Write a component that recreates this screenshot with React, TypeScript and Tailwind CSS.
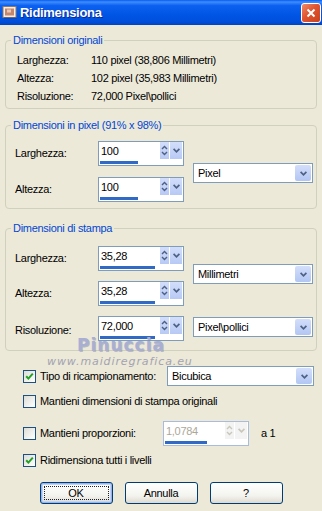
import React from 'react';

const Chevron: React.FC<{ color?: string }> = ({ color = '#4D6185' }) => (
  <svg width="7" height="5" viewBox="0 0 7 5">
    <path d="M0.6 0.9 L3.5 3.8 L6.4 0.9" fill="none" stroke={color} strokeWidth="1.7" />
  </svg>
);

const SpinArrows: React.FC<{ color?: string }> = ({ color = '#4D6185' }) => (
  <svg width="7" height="11" viewBox="0 0 7 11">
    <path d="M1 4 L3.5 1.5 L6 4" fill="none" stroke={color} strokeWidth="1.4" />
    <path d="M1 7 L3.5 9.5 L6 7" fill="none" stroke={color} strokeWidth="1.4" />
  </svg>
);

type SpinProps = { value: string; bar: string; disabled?: boolean };

const SpinBox: React.FC<SpinProps> = ({ value, bar, disabled }) => (
  <div
    className={`w-[86px] h-[25px] shrink-0 border bg-white flex flex-col ${
      disabled ? 'border-[#A9BCDD]' : 'border-[#7F9DB9]'
    }`}
  >
    <div className="flex h-[18px]">
      <span className={`flex-1 pl-[2px] leading-[18px] ${disabled ? 'text-[#ACA899]' : 'text-black'}`}>{value}</span>
      <div
        className={`w-[9px] h-[17px] flex items-center justify-center ${
          disabled ? 'bg-[#F3F3F3]' : 'bg-[linear-gradient(to_bottom,#D3DEFA,#B7C9F4)]'
        }`}
      >
        <SpinArrows color={disabled ? '#C9C7BA' : '#4D6185'} />
      </div>
      <div
        className={`ml-[1px] mr-[1px] w-[12px] h-[17px] flex items-center justify-center ${
          disabled ? 'bg-[#F3F3F3]' : 'bg-[linear-gradient(to_bottom,#D3DEFA,#B7C9F4)]'
        }`}
      >
        <Chevron color={disabled ? '#C9C7BA' : '#4D6185'} />
      </div>
    </div>
    <div className={`ml-[1px] mt-[1px] h-[3px] bg-[#316AC5] ${bar}`} />
  </div>
);

const Combo: React.FC<{ label: string; width: string }> = ({ label, width }) => (
  <div className={`${width} h-[20px] border border-[#7F9DB9] bg-white flex items-center`}>
    <span className="flex-1 pl-[4px]">{label}</span>
    <div className="mr-[1px] w-[16px] h-[16px] rounded-[2px] bg-[linear-gradient(to_bottom,#D3DEFA,#B2C6F3)] flex items-center justify-center">
      <Chevron />
    </div>
  </div>
);

const Check: React.FC<{ checked?: boolean }> = ({ checked }) => (
  <span className="w-[13px] h-[13px] shrink-0 border border-[#1C5180] bg-[linear-gradient(135deg,#DCDCD7,#FFFFFF)] flex items-center justify-center">
    {checked && (
      <svg width="9" height="9" viewBox="0 0 9 9">
        <path d="M1.2 4.2 L3.4 6.6 L7.8 1.6" fill="none" stroke="#21A121" strokeWidth="2" />
      </svg>
    )}
  </span>
);

const Group: React.FC<{ title: string; className: string; children: React.ReactNode }> = ({ title, className, children }) => (
  <fieldset className={`mx-[5px] border border-[#D0D0BF] rounded-[4px] ${className}`}>
    <legend className="ml-[5px] px-[2px] leading-[13px] text-[#0046D5]">{title}</legend>
    {children}
  </fieldset>
);

const XpButton: React.FC<{ label: string; focused?: boolean }> = ({ label, focused }) => (
  <button
    className={`relative w-[73px] h-[22px] rounded-[3px] border border-[#003C74] bg-[linear-gradient(to_bottom,#FFFFFF,#F3F3EE_65%,#DDD9CE)] text-black ${
      focused ? 'shadow-[inset_0_0_0_1px_#98B4EE,inset_0_0_0_2px_#C2D3F8]' : ''
    }`}
  >
    {focused && <span className="absolute inset-[3px] border border-dotted border-[#222]" />}
    {label}
  </button>
);

export default function App() {
  return (
    <div className="relative w-[322px] h-[511px] overflow-hidden bg-[#ECE9D8] text-[11px] tracking-[-0.3px] text-black font-['Liberation_Sans',Arial,sans-serif]">
      {/* title bar */}
      <div className="h-[25px] flex items-center bg-[linear-gradient(to_bottom,#0A5CF0_0%,#3D8DFF_8%,#0D61F0_22%,#0055E5_60%,#004FDB_85%,#0043C6_100%)]">
        <svg width="16" height="15" viewBox="0 0 16 15" className="ml-[2px]">
          <rect x="1" y="1.5" width="13" height="11" fill="#F4EEE4" stroke="#8C7A6A" />
          <rect x="3" y="3.5" width="9" height="7" fill="#C5866E" />
          <rect x="5" y="4.5" width="4" height="3" fill="#E8C7B4" />
          <rect x="2" y="12.5" width="13" height="1.5" fill="#1E3F9A" opacity="0.6" />
        </svg>
        <span className="ml-[2px] text-[13px] font-bold text-white tracking-[-0.3px] [text-shadow:1px_1px_0_#0A2A9A]">
          Ridimensiona
        </span>
        <div className="ml-auto mr-[1px] w-[20px] h-[20px] rounded-[3px] border border-white bg-[linear-gradient(135deg,#EF8B6A,#E0542E_45%,#C9411C)] flex items-center justify-center">
          <svg width="10" height="10" viewBox="0 0 10 10">
            <path d="M1.5 1.5 L8.5 8.5 M8.5 1.5 L1.5 8.5" stroke="white" strokeWidth="2" />
          </svg>
        </div>
      </div>

      <Group title="Dimensioni originali" className="mt-[9px] pt-[4px] pb-[3px]">
        <div className="pl-[11px] flex flex-col">
          {[
            ['Larghezza:', '110 pixel (38,806 Millimetri)'],
            ['Altezza:', '102 pixel (35,983 Millimetri)'],
            ['Risoluzione:', '72,000 Pixel\\pollici'],
          ].map(([k, v]) => (
            <div key={k} className="h-[18px] flex items-center">
              <span className="w-[74px]">{k}</span>
              <span>{v}</span>
            </div>
          ))}
        </div>
      </Group>

      <Group title="Dimensioni in pixel (91% x 98%)" className="mt-[10px] pt-[9px] pb-[6px]">
        <div className="pl-[9px] flex items-center">
          <div className="flex flex-col gap-[11px]">
            <div className="flex items-center">
              <span className="w-[83px]">Larghezza:</span>
              <SpinBox value="100" bar="w-[38px]" />
            </div>
            <div className="flex items-center">
              <span className="w-[83px]">Altezza:</span>
              <SpinBox value="100" bar="w-[38px]" />
            </div>
          </div>
          <div className="ml-[9px] mt-[3px]">
            <Combo label="Pixel" width="w-[120px]" />
          </div>
        </div>
      </Group>

      <Group title="Dimensioni di stampa" className="mt-[13px] pt-[11px] pb-[7px]">
        <div className="pl-[9px] flex flex-col gap-[10px]">
          <div className="flex items-center">
            <div className="flex flex-col gap-[10px]">
              <div className="flex items-center">
                <span className="w-[83px]">Larghezza:</span>
                <SpinBox value="35,28" bar="w-[55px]" />
              </div>
              <div className="flex items-center">
                <span className="w-[83px]">Altezza:</span>
                <SpinBox value="35,28" bar="w-[55px]" />
              </div>
            </div>
            <div className="ml-[9px] mt-[-4px]">
              <Combo label="Millimetri" width="w-[120px]" />
            </div>
          </div>
          <div className="flex items-start">
            <span className="w-[83px] leading-[25px] mt-[2px]">Risoluzione:</span>
            <SpinBox value="72,000" bar="w-[55px]" />
            <div className="ml-[9px] mt-[1px]">
              <Combo label="Pixel\pollici" width="w-[120px]" />
            </div>
          </div>
        </div>
      </Group>

      <div className="pl-[23px] mt-[15px] h-[20px] flex items-center">
        <Check checked />
        <span className="ml-[4px] w-[127px]">Tipo di ricampionamento:</span>
        <Combo label="Bicubica" width="w-[147px]" />
      </div>

      <div className="pl-[23px] mt-[9px] h-[13px] flex items-center">
        <Check />
        <span className="ml-[4px]">Mantieni dimensioni di stampa originali</span>
      </div>

      <div className="pl-[23px] mt-[13px] h-[25px] flex items-center">
        <Check />
        <span className="ml-[4px] w-[123px]">Mantieni proporzioni:</span>
        <SpinBox value="1,0784" bar="w-[42px]" disabled />
        <span className="ml-[12px]">a 1</span>
      </div>

      <div className="pl-[23px] mt-[8px] h-[13px] flex items-center">
        <Check checked />
        <span className="ml-[4px]">Ridimensiona tutti i livelli</span>
      </div>

      <div className="mt-[15px] flex justify-center gap-[12px]">
        <XpButton label="OK" focused />
        <XpButton label="Annulla" />
        <XpButton label="?" />
      </div>

      {/* watermark */}
      <div className="absolute left-[77px] top-[333px] text-[17px] font-bold tracking-[1px] text-[#A9AFD2] [text-shadow:1px_1px_0_rgba(120,126,160,0.45)] font-['DejaVu_Sans',sans-serif]">
        Pinuccia
      </div>
      <div className="absolute left-[47px] top-[354px] text-[11px] italic tracking-[0.9px] text-[#A3A3B2] font-['DejaVu_Sans',sans-serif]">
        www.maidiregrafica.eu
      </div>
    </div>
  );
}
